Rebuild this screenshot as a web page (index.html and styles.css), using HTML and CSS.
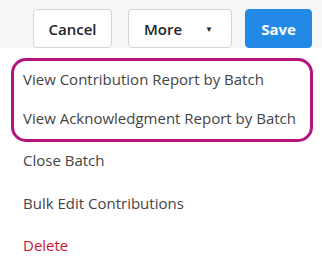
FILE: index.html
```html
<!DOCTYPE html>
<html>
<head>
<meta charset="utf-8">
<link rel="stylesheet" href="styles.css">
</head>
<body>
<div class="toolbar">
  <button class="btn btn-default">Cancel</button>
  <button class="btn btn-default btn-more">More <span class="caret">&#9660;</span></button>
  <button class="btn btn-primary">Save</button>
</div>
<div class="menu">
  <div class="highlight">
    <div class="item">View Contribution Report by Batch</div>
    <div class="item">View Acknowledgment Report by Batch</div>
  </div>
  <div class="item plain first">Close Batch</div>
  <div class="item plain">Bulk Edit Contributions</div>
  <div class="item plain danger">Delete</div>
</div>
</body>
</html>
```
FILE: styles.css
```css
html, body {
  margin: 0;
  padding: 0;
  background: #ffffff;
  font-family: "Open Sans", "Noto Sans", sans-serif;
}
.toolbar {
  height: 48px;
  box-sizing: border-box;
  background: #f5f6f7;
  display: flex;
  justify-content: flex-end;
  align-items: flex-start;
  padding: 9px 10px 0 0;
}
.btn {
  height: 39px;
  box-sizing: border-box;
  border-radius: 4px;
  font-family: "Open Sans", "Noto Sans", sans-serif;
  font-size: 15px;
  font-weight: 600;
  padding: 0;
  margin: 0;
}
.btn-default {
  background: #ffffff;
  border: 1px solid #d3d5d8;
  color: #212529;
}
.btn-default:first-child {
  width: 79px;
  margin-right: 16px;
}
.btn-more {
  width: 104px;
  margin-right: 13px;
  display: flex;
  align-items: center;
  padding-left: 15px;
}
.caret {
  font-size: 8px;
  margin-left: 23px;
  color: #212529;
}
.btn-primary {
  width: 67px;
  background: #2389e6;
  border: 1px solid #2389e6;
  color: #ffffff;
  font-weight: 700;
}
.menu {
  padding-top: 10px;
}
.highlight {
  margin-left: 11px;
  width: 302px;
  box-sizing: border-box;
  border: 3px solid #b4137e;
  border-radius: 15px;
  padding: 0;
}
.item {
  font-size: 15px;
  color: #444444;
  height: 39px;
  line-height: 37px;
  padding-left: 9px;
  white-space: nowrap;
}
.item.plain {
  height: 42px;
  line-height: 42px;
  padding-left: 23px;
}
.item.plain.first {
  height: 40px;
  line-height: 37px;
}
.item.danger {
  color: #d41532;
}
```
